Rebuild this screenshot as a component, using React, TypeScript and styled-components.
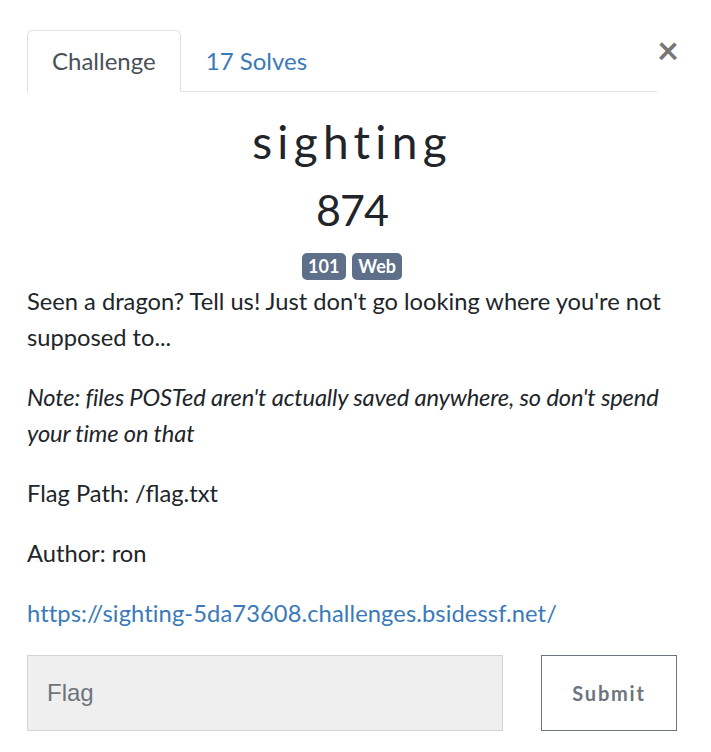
import React from "react";
import styled, { createGlobalStyle } from "styled-components";

const Global = createGlobalStyle`
  html, body { margin: 0; padding: 0; background: #fff; }
  body { font-family: Lato, "Open Sans", sans-serif; color: #212529; }
  * { box-sizing: border-box; }
`;

const Body = styled.div`
  padding: 30px 34px 0 27px;
  width: 711px;
`;

const Header = styled.div`
  display: flex;
  align-items: flex-start;
`;

const Tabs = styled.ul`
  flex: 1;
  display: flex;
  list-style: none;
  margin: 0;
  padding: 0;
  border-bottom: 1px solid #dee2e6;
`;

const Tab = styled.li<{ $active?: boolean }>`
  margin-bottom: -1px;
  padding: 12px 24px;
  font-size: 24px;
  line-height: 36px;
  border: 1px solid ${(p) => (p.$active ? "#dee2e6" : "transparent")};
  border-bottom-color: ${(p) => (p.$active ? "#fff" : "transparent")};
  border-radius: 6px 6px 0 0;
  background: ${(p) => (p.$active ? "#fff" : "transparent")};
  color: ${(p) => (p.$active ? "#495057" : "#3a7ab8")};
`;

const Close = styled.button`
  width: 20px;
  margin-top: 0;
  padding: 0;
  border: 0;
  background: none;
  font-family: Lato, sans-serif;
  font-size: 38px;
  font-weight: 700;
  line-height: 1;
  color: #777;
  text-align: right;
  cursor: pointer;
`;

const Title = styled.h2`
  margin: 0 0 15px 0;
  padding-top: 22px;
  text-align: center;
  font-family: Lato, sans-serif;
  font-weight: 400;
  font-size: 46px;
  line-height: 56px;
  letter-spacing: 5.3px;
  color: #212529;
`;

const Value = styled.h3`
  margin: 0 0 18px 0;
  text-align: center;
  font-family: Lato, sans-serif;
  font-weight: 400;
  font-size: 43px;
  line-height: 50px;
  letter-spacing: -1px;
  color: #212529;
`;

const TagRow = styled.div`
  display: flex;
  justify-content: center;
  gap: 6px;
`;

const Badge = styled.span`
  display: inline-block;
  padding: 4px 6.5px;
  border-radius: 5px;
  background: #5e6f8a;
  color: #fff;
  font-size: 18px;
  font-weight: 700;
  line-height: 19px;
`;

const Para = styled.p<{ $italic?: boolean }>`
  margin: 0 0 24px 0;
  font-size: 23.7px;
  line-height: 36px;
  font-style: ${(p) => (p.$italic ? "italic" : "normal")};
  letter-spacing: ${(p) => (p.$italic ? "-0.15px" : "normal")};
  color: #212529;
  &:first-of-type { margin-top: 3px; }
`;

const Link = styled.a`
  color: #3a7ab8;
  text-decoration: none;
  letter-spacing: 0.1px;
`;

const SubmitRow = styled.div`
  display: flex;
  justify-content: space-between;
`;

const FlagInput = styled.input`
  width: 476px;
  height: 76px;
  padding: 0 19px;
  background: #efefef;
  border: 1px solid #d4d4d4;
  font-family: "Liberation Sans", Arial, sans-serif;
  font-size: 24px;
  color: #495057;
  outline: none;
  &::placeholder { color: #6c757d; }
`;

const SubmitButton = styled.button`
  width: 136px;
  height: 76px;
  background: #fff;
  border: 1px solid #6c757d;
  color: #6c757d;
  font-family: Lato, sans-serif;
  font-weight: 700;
  font-size: 20px;
  letter-spacing: 1.8px;
`;

export default function App() {
  return (
    <>
      <Global />
      <Body>
        <Header>
          <Tabs>
            <Tab $active>Challenge</Tab>
            <Tab>17 Solves</Tab>
          </Tabs>
          <Close aria-label="Close">×</Close>
        </Header>
        <Title>sighting</Title>
        <Value>874</Value>
        <TagRow>
          <Badge>101</Badge>
          <Badge>Web</Badge>
        </TagRow>
        <Para>Seen a dragon? Tell us! Just don't go looking where you're not supposed to...</Para>
        <Para $italic>Note: files POSTed aren't actually saved anywhere, so don't spend your time on that</Para>
        <Para>Flag Path: /flag.txt</Para>
        <Para>Author: ron</Para>
        <Para>
          <Link href="#">https://sighting-5da73608.challenges.bsidessf.net/</Link>
        </Para>
        <SubmitRow>
          <FlagInput placeholder="Flag" />
          <SubmitButton>Submit</SubmitButton>
        </SubmitRow>
      </Body>
    </>
  );
}
